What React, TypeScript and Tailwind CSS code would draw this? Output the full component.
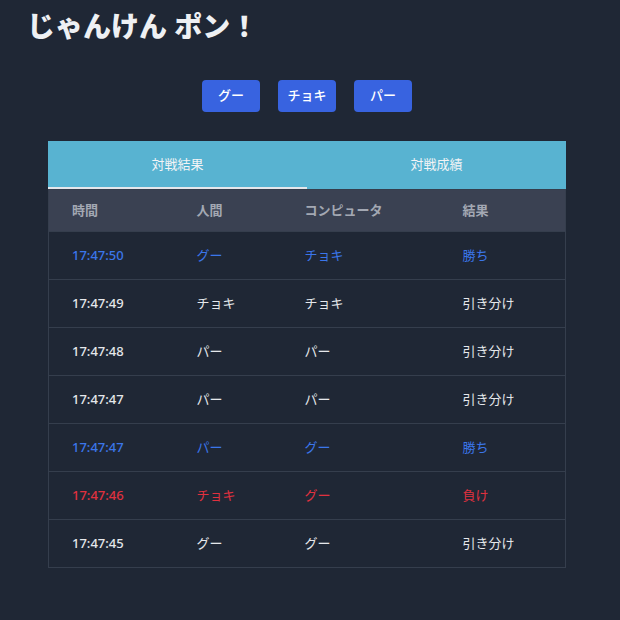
import { useState } from "react"

type Result = "win" | "lose" | "draw"

const rows: { time: string; human: string; cpu: string; result: Result }[] = [
  { time: "17:47:50", human: "グー", cpu: "チョキ", result: "win" },
  { time: "17:47:49", human: "チョキ", cpu: "チョキ", result: "draw" },
  { time: "17:47:48", human: "パー", cpu: "パー", result: "draw" },
  { time: "17:47:47", human: "パー", cpu: "パー", result: "draw" },
  { time: "17:47:47", human: "パー", cpu: "グー", result: "win" },
  { time: "17:47:46", human: "チョキ", cpu: "グー", result: "lose" },
  { time: "17:47:45", human: "グー", cpu: "グー", result: "draw" },
]

const label: Record<Result, string> = { win: "勝ち", lose: "負け", draw: "引き分け" }
const color: Record<Result, string> = {
  win: "text-[#3b76ea]",
  lose: "text-[#e0313f]",
  draw: "text-[#e5e7eb]",
}

export default function App() {
  const [tab, setTab] = useState(0)

  return (
    <div
      className="min-h-[620px] bg-[#1f2735] text-[#e5e7eb]"
      style={{ fontFamily: '"Noto Sans", "Noto Sans CJK JP", sans-serif' }}
    >
      <h1 className="pl-[27px] pt-[6px] text-[28px] font-black leading-[40px] text-[#eef0f3]">じゃんけん ポン！</h1>

      <div className="mt-[34px] flex justify-center gap-[18px] pr-[6px]">
        {["グー", "チョキ", "パー"].map((h) => (
          <button
            key={h}
            className="h-[32px] w-[58px] rounded-[4px] bg-[#3863e0] text-[13px] font-medium text-white"
          >
            {h}
          </button>
        ))}
      </div>

      <div className="ml-[48px] mt-[29px] w-[518px]">
        <div className="flex h-[48px] bg-[#58b3d1]">
          {["対戦結果", "対戦成績"].map((t, i) => (
            <button
              key={t}
              onClick={() => setTab(i)}
              className={
                "flex-1 border-b-2 pt-[2px] text-[13px] text-[#f3f4f6] " +
                (tab === i ? "border-[#e5e7eb]" : "border-transparent")
              }
            >
              {t}
            </button>
          ))}
        </div>

        <table className="w-full table-fixed border-collapse border border-[#353e4d] text-[13px]">
          <colgroup>
            <col className="w-[125px]" />
            <col className="w-[108px]" />
            <col className="w-[158px]" />
            <col />
          </colgroup>
          <thead>
            <tr className="h-[42px] bg-[#3a4152] text-left text-[#a3a8b3]">
              <th className="pl-[23px] font-semibold">時間</th>
              <th className="pl-[23px] font-semibold">人間</th>
              <th className="pl-[23px] font-semibold">コンピュータ</th>
              <th className="pl-[23px] font-semibold">結果</th>
            </tr>
          </thead>
          <tbody>
            {rows.map((r, i) => (
              <tr key={i} className={"h-[48px] border-t border-[#353e4d] " + color[r.result]}>
                <td className="pl-[23px] font-medium">{r.time}</td>
                <td className="pl-[23px]">{r.human}</td>
                <td className="pl-[23px]">{r.cpu}</td>
                <td className="pl-[23px]">{label[r.result]}</td>
              </tr>
            ))}
          </tbody>
        </table>
      </div>
    </div>
  )
}
